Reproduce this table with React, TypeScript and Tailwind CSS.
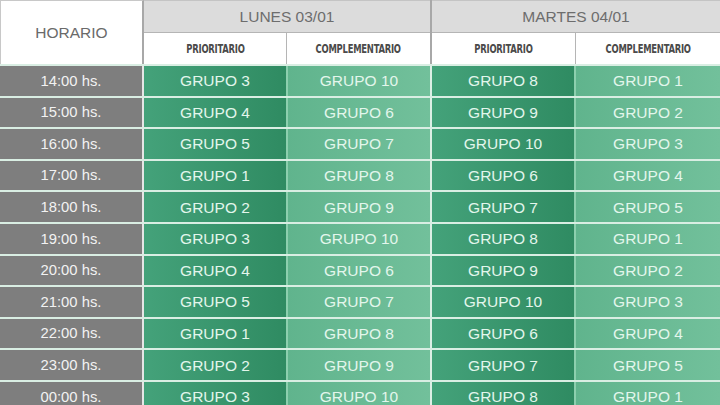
import React from 'react';

const rows = [
  { hora: '14:00 hs.', g: [3, 10, 8, 1] },
  { hora: '15:00 hs.', g: [4, 6, 9, 2] },
  { hora: '16:00 hs.', g: [5, 7, 10, 3] },
  { hora: '17:00 hs.', g: [1, 8, 6, 4] },
  { hora: '18:00 hs.', g: [2, 9, 7, 5] },
  { hora: '19:00 hs.', g: [3, 10, 8, 1] },
  { hora: '20:00 hs.', g: [4, 6, 9, 2] },
  { hora: '21:00 hs.', g: [5, 7, 10, 3] },
  { hora: '22:00 hs.', g: [1, 8, 6, 4] },
  { hora: '23:00 hs.', g: [2, 9, 7, 5] },
  { hora: '00:00 hs.', g: [3, 10, 8, 1] },
];

const days = ['LUNES 03/01', 'MARTES 04/01'];

const SubHead = ({ label, last }: { label: string; last?: boolean }) => (
  <div
    className={`h-[32px] flex items-center justify-center bg-white border-t border-[#b5b5b5] ${
      last ? '' : 'border-r border-[#a8a8a8]'
    }`}
  >
    <span className="inline-block scale-x-[0.72] text-[13px] font-bold text-[#4a4a4a] font-['DejaVu_Sans_Condensed','DejaVu_Sans',sans-serif] tracking-tight">
      {label}
    </span>
  </div>
);

export default function App() {
  return (
    <div className="w-[720px] h-[405px] overflow-hidden bg-white font-['Liberation_Sans',Arial,sans-serif]">
      {/* Header */}
      <div className="grid grid-cols-[144px_288px_288px] h-[64px]">
        <div className="flex items-center justify-center bg-white border-l border-t border-[#c8c8c8] border-r-2 border-r-[#a8a8a8] text-[15.5px] text-[#6a6a6a]">
          HORARIO
        </div>
        {days.map((d, i) => (
          <div key={d} className={`flex flex-col ${i === 0 ? 'border-r-2 border-[#a8a8a8]' : ''}`}>
            <div className="h-[32px] flex items-center justify-center bg-[#dcdcdc] border-t border-[#c4c4c4] text-[15.5px] text-[#6d6d6d]">
              {d}
            </div>
            <div className="grid grid-cols-2">
              <SubHead label="PRIORITARIO" />
              <SubHead label="COMPLEMENTARIO" last />
            </div>
          </div>
        ))}
      </div>

      {/* Rows */}
      {rows.map((r) => (
        <div
          key={r.hora}
          className="grid grid-cols-[144px_144px_144px_144px_144px] h-[31.6px] border-t-2 border-[#d9eee3]"
        >
          <div className="flex items-center justify-center bg-[#7e7e7e] border-r-2 border-[#e6e6e6] text-[14.8px] text-[#f2f2f2]">
            {r.hora}
          </div>
          {r.g.map((n, i) => {
            const prio = i % 2 === 0;
            return (
              <div
                key={i}
                className={`flex items-center justify-center text-[15.5px] text-[#e3f6ec] ${
                  prio
                    ? 'bg-gradient-to-r from-[#44a27a] to-[#2f8b62] border-r-2 border-[#8ccfae]'
                    : `bg-gradient-to-r from-[#60b48d] to-[#72c09b] ${i === 1 ? 'border-r-2 border-[#dcefe5]' : ''}`
                }`}
              >
                GRUPO {n}
              </div>
            );
          })}
        </div>
      ))}
    </div>
  );
}
